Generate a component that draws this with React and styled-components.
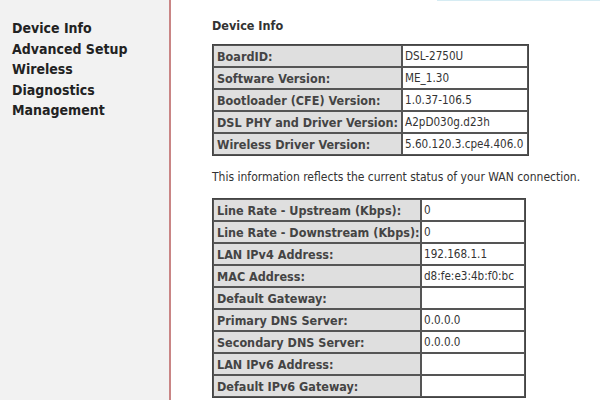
import React from 'react';
import styled, { createGlobalStyle } from 'styled-components';

const GlobalStyle = createGlobalStyle`
  html, body {
    margin: 0;
    padding: 0;
    background: #fff;
  }
  body {
    font-family: 'DejaVu Sans Condensed', 'DejaVu Sans', Tahoma, sans-serif;
    color: #333;
  }
`;

const Page = styled.div`
  display: flex;
  width: 600px;
  height: 400px;
  overflow: hidden;
`;

const Sidebar = styled.div`
  width: 171px;
  flex-shrink: 0;
  background: #f2f2f2;
  border-right: 2px solid #c98585;
  padding: 18px 0 0 12px;
  box-sizing: border-box;
`;

const MenuItem = styled.div`
  font-size: 14px;
  font-weight: bold;
  color: #222;
  line-height: 20.5px;
`;

const Content = styled.div`
  flex: 1;
  display: flex;
  flex-direction: column;
  align-items: flex-start;
  padding-left: 41px;
`;

const TopStrip = styled.div`
  align-self: stretch;
  height: 1px;
  margin-left: 225px;
  background: #d6ecf3;
`;

const Title = styled.div`
  font-size: 12.5px;
  font-weight: bold;
  color: #333;
  margin-top: 18px;
  line-height: 14px;
`;

const InfoTable = styled.table`
  border-collapse: separate;
  border-spacing: 0;
  border: 1px solid #444;
  margin-top: ${p => p.$top}px;
  table-layout: fixed;
  width: ${p => p.$w}px;
`;

const Label = styled.td`
  width: ${p => p.$w}px;
  border: 1px solid #555;
  background: #dfdfdf;
  color: #444;
  font-size: 12.5px;
  font-weight: bold;
  padding: 2px 3px;
  height: 22px;
  box-sizing: border-box;
  white-space: nowrap;
  overflow: hidden;
`;

const Value = styled.td`
  border: 1px solid #555;
  background: #fff;
  color: #333;
  font-size: 11.6px;
  padding: 2px 2px;
  height: 22px;
  box-sizing: border-box;
  white-space: nowrap;
  overflow: hidden;
`;

const Note = styled.div`
  font-size: 12px;
  color: #333;
  margin-top: 14px;
  line-height: 14px;
`;

const deviceRows = [
  ['BoardID:', 'DSL-2750U'],
  ['Software Version:', 'ME_1.30'],
  ['Bootloader (CFE) Version:', '1.0.37-106.5'],
  ['DSL PHY and Driver Version:', 'A2pD030g.d23h'],
  ['Wireless Driver Version:', '5.60.120.3.cpe4.406.0'],
];

const wanRows = [
  ['Line Rate - Upstream (Kbps):', '0'],
  ['Line Rate - Downstream (Kbps):', '0'],
  ['LAN IPv4 Address:', '192.168.1.1'],
  ['MAC Address:', 'd8:fe:e3:4b:f0:bc'],
  ['Default Gateway:', ''],
  ['Primary DNS Server:', '0.0.0.0'],
  ['Secondary DNS Server:', '0.0.0.0'],
  ['LAN IPv6 Address:', ''],
  ['Default IPv6 Gateway:', ''],
];

const App = () => {
  return (
    <Page>
      <GlobalStyle />
      <Sidebar>
        <MenuItem>Device Info</MenuItem>
        <MenuItem>Advanced Setup</MenuItem>
        <MenuItem>Wireless</MenuItem>
        <MenuItem>Diagnostics</MenuItem>
        <MenuItem>Management</MenuItem>
      </Sidebar>
      <Content>
        <TopStrip />
        <Title>Device Info</Title>
        <InfoTable $top={11} $w={317}>
          <tbody>
            {deviceRows.map(([k, v]) => (
              <tr key={k}>
                <Label $w={189}>{k}</Label>
                <Value>{v}</Value>
              </tr>
            ))}
          </tbody>
        </InfoTable>
        <Note>This information reflects the current status of your WAN connection.</Note>
        <InfoTable $top={14} $w={314}>
          <tbody>
            {wanRows.map(([k, v]) => (
              <tr key={k}>
                <Label $w={208}>{k}</Label>
                <Value>{v}</Value>
              </tr>
            ))}
          </tbody>
        </InfoTable>
      </Content>
    </Page>
  );
};

export default App;
